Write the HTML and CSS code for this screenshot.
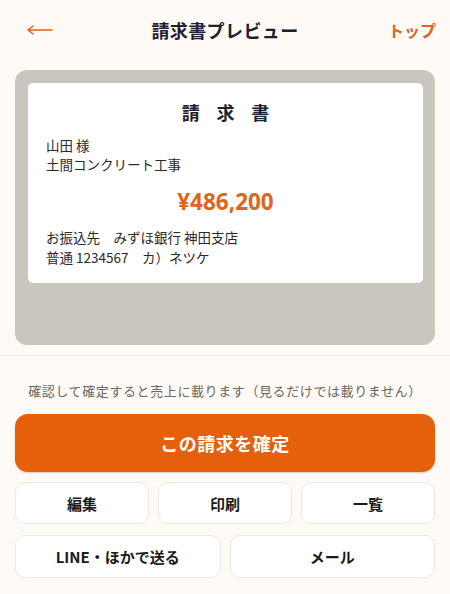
FILE: index.html
```html
<!DOCTYPE html>
<html lang="ja">
<head>
<meta charset="utf-8">
<title>請求書プレビュー</title>
<link rel="stylesheet" href="styles.css">
</head>
<body>
<header class="header">
  <a class="back" aria-label="戻る">
    <svg width="26" height="12" viewBox="0 0 26 12"><path d="M1 6H25M1 6L6 2M1 6L6 10" fill="none" stroke="#e2631a" stroke-width="1.5" stroke-linecap="round" stroke-linejoin="round"/></svg>
  </a>
  <h1 class="title">請求書プレビュー</h1>
  <a class="top-link">トップ</a>
</header>

<section class="preview">
  <div class="sheet">
    <div class="sheet-title">請 求 書</div>
    <div class="lines">
      <div>山田 様</div>
      <div>土間コンクリート工事</div>
    </div>
    <div class="amount">¥486,200</div>
    <div class="lines bank">
      <div>お振込先　みずほ銀行 神田支店</div>
      <div>普通 1234567　カ）ネツケ</div>
    </div>
  </div>
</section>

<section class="actions">
  <p class="note">確認して確定すると売上に載ります（見るだけでは載りません）</p>
  <button class="confirm">この請求を確定</button>
  <div class="row three">
    <button class="sub">編集</button>
    <button class="sub">印刷</button>
    <button class="sub">一覧</button>
  </div>
  <div class="row two">
    <button class="sub">LINE・ほかで送る</button>
    <button class="sub">メール</button>
  </div>
</section>
</body>
</html>
```

FILE: styles.css
```css
* { box-sizing: border-box; }
html, body { margin: 0; padding: 0; }
body {
  background: #fffaf6;
  font-family: "Noto Sans CJK JP", "Noto Sans", sans-serif;
  color: #1d2030;
  width: 450px;
  height: 594px;
  overflow: hidden;
}

.header {
  height: 60px;
  display: grid;
  grid-template-columns: 1fr auto 1fr;
  align-items: center;
  padding: 0 14px;
}
.back { display: flex; align-items: center; justify-self: start; margin-left: 13px; }
.title {
  margin: 0;
  font-size: 18px;
  font-weight: 700;
  letter-spacing: 0.4px;
  color: #1d2030;
}
.top-link {
  justify-self: end;
  font-size: 16px;
  font-weight: 700;
  color: #e2631a;
}

.preview {
  margin: 10px 15px 0;
  height: 275px;
  background: #c9c5bf;
  border-radius: 12px;
  padding: 13px 12px 0 13px;
}
.sheet {
  background: #ffffff;
  border-radius: 5px;
  height: 200px;
  padding: 16px 18px 0;
}
.sheet-title {
  text-align: center;
  font-size: 18px;
  font-weight: 700;
  line-height: 26px;
  letter-spacing: 0.35em;
  text-indent: 0.35em;
  color: #1d2030;
}
.lines {
  margin-top: 11px;
  font-size: 13.5px;
  line-height: 19px;
  color: #2a2a2a;
}
.amount {
  margin-top: 13px;
  text-align: center;
  font-family: "Noto Sans", sans-serif;
  font-size: 22.5px;
  font-weight: 700;
  line-height: 30px;
  color: #e2631a;
}
.bank {
  margin-top: 10px;
  line-height: 20px;
}

.actions {
  margin-top: 10px;
  border-top: 1px solid #efe8e0;
  padding: 0 15px;
}
.note {
  margin: 25px 0 13px;
  text-align: center;
  font-size: 13px;
  line-height: 20px;
  letter-spacing: 0.6px;
  color: #6b6762;
}
button {
  font-family: inherit;
  cursor: pointer;
}
.confirm {
  display: block;
  width: 100%;
  height: 58px;
  border: none;
  border-radius: 13px;
  background: #e65f0a;
  color: #ffffff;
  font-size: 18px;
  font-weight: 700;
  letter-spacing: 0.5px;
  box-shadow: 0 1px 2px rgba(120, 60, 10, 0.25);
}
.row {
  display: grid;
  gap: 9px;
  margin-top: 10px;
}
.row.three { grid-template-columns: 1fr 1fr 1fr; }
.row.two { grid-template-columns: 1fr 1fr; margin-top: 11px; }
.sub {
  height: 42px;
  background: #ffffff;
  border: 1px solid #eee7e0;
  border-radius: 10px;
  font-size: 15px;
  font-weight: 700;
  color: #1a1a1a;
}
.row.two .sub { height: 43px; }
```
